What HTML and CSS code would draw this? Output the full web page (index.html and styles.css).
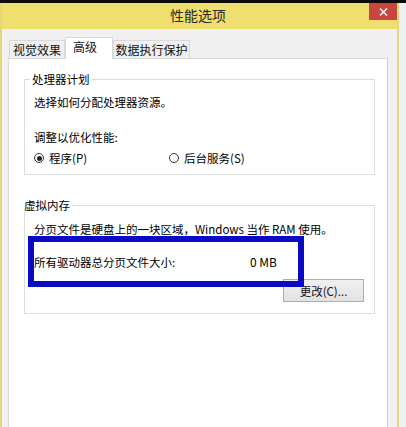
FILE: index.html
```html
<!DOCTYPE html>
<html lang="zh-CN">
<head>
<meta charset="utf-8">
<title>性能选项</title>
<link rel="stylesheet" href="styles.css">
</head>
<body>
<div class="topstrip"></div>
<div class="window">
  <div class="titlebar">
    <span class="title">性能选项</span>
    <button class="close" aria-label="关闭">
      <svg width="9" height="8" viewBox="0 0 9 8"><path d="M1 0.5 L8 7.5 M8 0.5 L1 7.5" stroke="#fbeaea" stroke-width="1.7" fill="none"/></svg>
    </button>
  </div>
  <div class="body">
    <div class="tabs">
      <div class="tab t1">视觉效果</div>
      <div class="tab active">高级</div>
      <div class="tab t3">数据执行保护</div>
    </div>
    <div class="panel">
      <fieldset class="group g1">
        <legend>处理器计划</legend>
        <p class="line first">选择如何分配处理器资源。</p>
        <p class="line second">调整以优化性能:</p>
        <div class="radios">
          <label class="radio"><span class="dot checked"></span>程序(P)</label>
          <label class="radio"><span class="dot"></span>后台服务(S)</label>
        </div>
      </fieldset>
      <fieldset class="group g2">
        <legend>虚拟内存</legend>
        <p class="line desc">分页文件是硬盘上的一块区域，Windows 当作 RAM 使用。</p>
        <div class="highlight">
          <span class="label">所有驱动器总分页文件大小:</span>
          <span class="size">0 MB</span>
        </div>
        <div class="btnrow"><button class="btn">更改(C)...</button></div>
      </fieldset>
    </div>
  </div>
</div>
</body>
</html>
```
FILE: styles.css
```css
html, body {
  margin: 0;
  padding: 0;
}
body {
  background: #eef1f4;
  font-family: "Noto Sans CJK SC", "Noto Sans", sans-serif;
  font-size: 11.5px;
  color: #000;
  height: 427px;
  overflow: hidden;
}
.topstrip {
  display: block;
  height: 3px;
  background: #0c0c0c;
}
.window {
  width: 395px;
  height: 424px;
  border-left: 2px solid #e6d677;
  border-right: 2px solid #e6d677;
  display: flex;
  flex-direction: column;
}
.titlebar {
  height: 26px;
  flex: none;
  background: #efdf6e;
  display: flex;
  align-items: flex-start;
}
.title {
  flex: 1;
  padding-left: 168px;
  text-align: left;
  font-size: 14px;
  line-height: 25px;
  color: #2a2a2a;
}
.close {
  flex: none;
  width: 28px;
  height: 17px;
  margin: 0;
  padding: 0;
  border: 0;
  background: #c8463f;
  display: flex;
  align-items: center;
  justify-content: center;
}
.body {
  flex: 1;
  background: #f0f0f0;
  padding: 8px 9px 0 6px;
  display: flex;
  flex-direction: column;
}
.tabs {
  display: flex;
  align-items: flex-end;
  margin: 0 0 -1px 1px;
  position: relative;
  z-index: 1;
  font-size: 12px;
}
.tab {
  box-sizing: border-box;
  height: 18px;
  line-height: 17px;
  margin-bottom: 1px;
  border: 1px solid #d9d9d9;
  border-bottom: none;
  background: #f0f0f0;
  color: #111;
  text-align: center;
}
.t1 { width: 56px; }
.t3 { width: 77px; }
.active {
  width: 48px;
  height: 22px;
  line-height: 18px;
  margin-bottom: 0;
  background: #fff;
  padding-right: 8px;
}
.panel {
  flex: 1;
  background: #fff;
  border: 1px solid #d9d9d9;
  border-right-color: #cdc8da;
  border-bottom: none;
  padding: 0 12px 0 15px;
}
.group {
  margin: 0;
  border: 1px solid #dcdcdc;
  padding: 0 9px;
  min-width: 0;
}
.group legend {
  font-size: 11.5px;
  line-height: 14px;
  padding: 0 2px;
  margin-left: -4px;
}
.g1 {
  margin-top: 13px;
  padding-bottom: 8px;
}
.g2 {
  margin-top: 23px;
  padding-left: 1px;
  padding-bottom: 11px;
}
.line {
  margin: 0;
  line-height: 16px;
}
.first { margin-top: 8px; }
.second { margin-top: 19px; }
.radios {
  margin-top: 5px;
  display: grid;
  grid-template-columns: 135px auto;
  line-height: 16px;
}
.radio {
  display: flex;
  align-items: center;
  gap: 5px;
}
.dot {
  width: 10px;
  height: 10px;
  border: 1px solid #333;
  border-radius: 50%;
  box-sizing: border-box;
  position: relative;
}
.dot.checked::after {
  content: "";
  position: absolute;
  left: 1.5px;
  top: 1.5px;
  width: 5px;
  height: 5px;
  border-radius: 50%;
  background: #222;
}
.desc {
  margin-top: 10px;
  padding-left: 8px;
  line-height: 14px;
}
.highlight {
  position: relative;
  z-index: 1;
  width: 264px;
  margin-left: 2px;
  border: 6px solid #0a0ac4;
  padding: 12px 0 11px 0;
  display: flex;
  line-height: 16px;
}
.label { width: 216px; }
.size { font-size: 12px; }
.btnrow {
  margin-top: -8px;
  display: flex;
  justify-content: flex-end;
  padding-right: 1px;
}
.btn {
  width: 81px;
  height: 23px;
  padding: 0;
  font-family: inherit;
  font-size: 11.5px;
  color: #111;
  border: 1px solid #adadad;
  background: linear-gradient(#f0f0f0, #e2e2e2);
}
```
